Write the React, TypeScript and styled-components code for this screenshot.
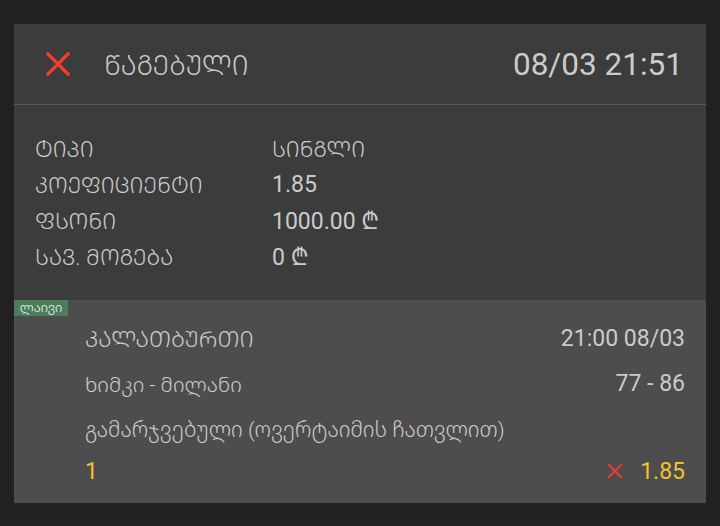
import React from "react"
import styled, { createGlobalStyle } from "styled-components"

const GlobalStyle = createGlobalStyle`
  html, body {
    margin: 0;
    padding: 0;
    background: #212121;
    font-family: Roboto, "Noto Sans Georgian", sans-serif;
  }
`

// Mkhedruli -> Mtavruli (Georgian capitals)
const caps = (s: string): string =>
  Array.from(s)
    .map((c) => {
      const code = c.charCodeAt(0)
      return code >= 0x10d0 && code <= 0x10fa ? String.fromCharCode(code - 0x10d0 + 0x1c90) : c
    })
    .join("")

const details = [
  { label: "ტიპი", value: "სინგლი", geo: true },
  { label: "კოეფიციენტი", value: "1.85" },
  { label: "ფსონი", value: "1000.00 ₾" },
  { label: "სავ. მოგება", value: "0 ₾" },
]

function Cross({ size, stroke }: { size: number; stroke: number }): JSX.Element {
  return (
    <svg width={size} height={size} viewBox="0 0 24 24">
      <path d="M3 3 L21 21 M21 3 L3 21" stroke="#f23c2e" strokeWidth={stroke} fill="none" />
    </svg>
  )
}

function App(): JSX.Element {
  return (
    <Page>
      <GlobalStyle />
      <Card>
        <Header>
          <div className="status">
            <Cross size={30} stroke={2.6} />
            <Geo $size={27}>{caps("წაგებული")}</Geo>
          </div>
          <span className="date">08/03 21:51</span>
        </Header>
        <Details>
          {details.map((d) => (
            <DetailRow key={d.label}>
              <Geo $size={22.3}>{caps(d.label)}</Geo>
              {d.geo ? <Geo $size={22.3}>{caps(d.value)}</Geo> : <span>{d.value}</span>}
            </DetailRow>
          ))}
        </Details>
        <Event>
          <Badge>ლაივი</Badge>
          <EventRow>
            <Geo $size={22.8}>{caps("კალათბურთი")}</Geo>
            <span>21:00 08/03</span>
          </EventRow>
          <EventRow>
            <Geo $size={20.9}>ხიმკი - მილანი</Geo>
            <span>77 - 86</span>
          </EventRow>
          <EventRow>
            <Geo $size={21.1}>გამარჯვებული (ოვერტაიმის ჩათვლით)</Geo>
          </EventRow>
          <EventRow $accent>
            <span>1</span>
            <span className="odds">
              <Cross size={18} stroke={2.4} />
              1.85
            </span>
          </EventRow>
        </Event>
      </Card>
    </Page>
  )
}

const Page = styled.div`
  padding: 24px 14px 18px;
`

const Card = styled.div`
  background-color: #3c3c3c;
  color: #cbcbcb;
`

const Geo = styled.span<{ $size: number }>`
  font-size: ${(p) => p.$size}px;
  font-weight: 300;
`

const Header = styled.div`
  height: 80px;
  display: flex;
  align-items: center;
  justify-content: space-between;
  padding: 0 23px 0 29px;
  border-bottom: 1px solid #585858;
  .status {
    display: flex;
    align-items: center;
    gap: 31px;
  }
  .date {
    font-size: 31.5px;
  }
`

const Details = styled.div`
  padding: 25px 21px 26px;
`

const DetailRow = styled.div`
  display: grid;
  grid-template-columns: 237px 1fr;
  align-items: center;
  height: 36px;
  font-size: 23px;
`

const Event = styled.div`
  position: relative;
  background-color: #4d4d4d;
  padding: 16px 21px 12px 71px;
`

const Badge = styled.span`
  position: absolute;
  top: 0;
  left: 0;
  width: 54px;
  height: 16px;
  background-color: #4b7d5b;
  color: #ffffff;
  font-size: 13px;
  font-weight: 300;
  line-height: 16px;
  text-align: center;
`

const EventRow = styled.div<{ $accent?: boolean }>`
  display: flex;
  justify-content: space-between;
  align-items: center;
  height: 45px;
  font-size: 23px;
  color: ${(p) => (p.$accent ? "#f2c12e" : "#cbcbcb")};
  &:last-child {
    height: 40px;
  }
  .odds {
    display: flex;
    align-items: center;
    gap: 16px;
  }
`

export default App
